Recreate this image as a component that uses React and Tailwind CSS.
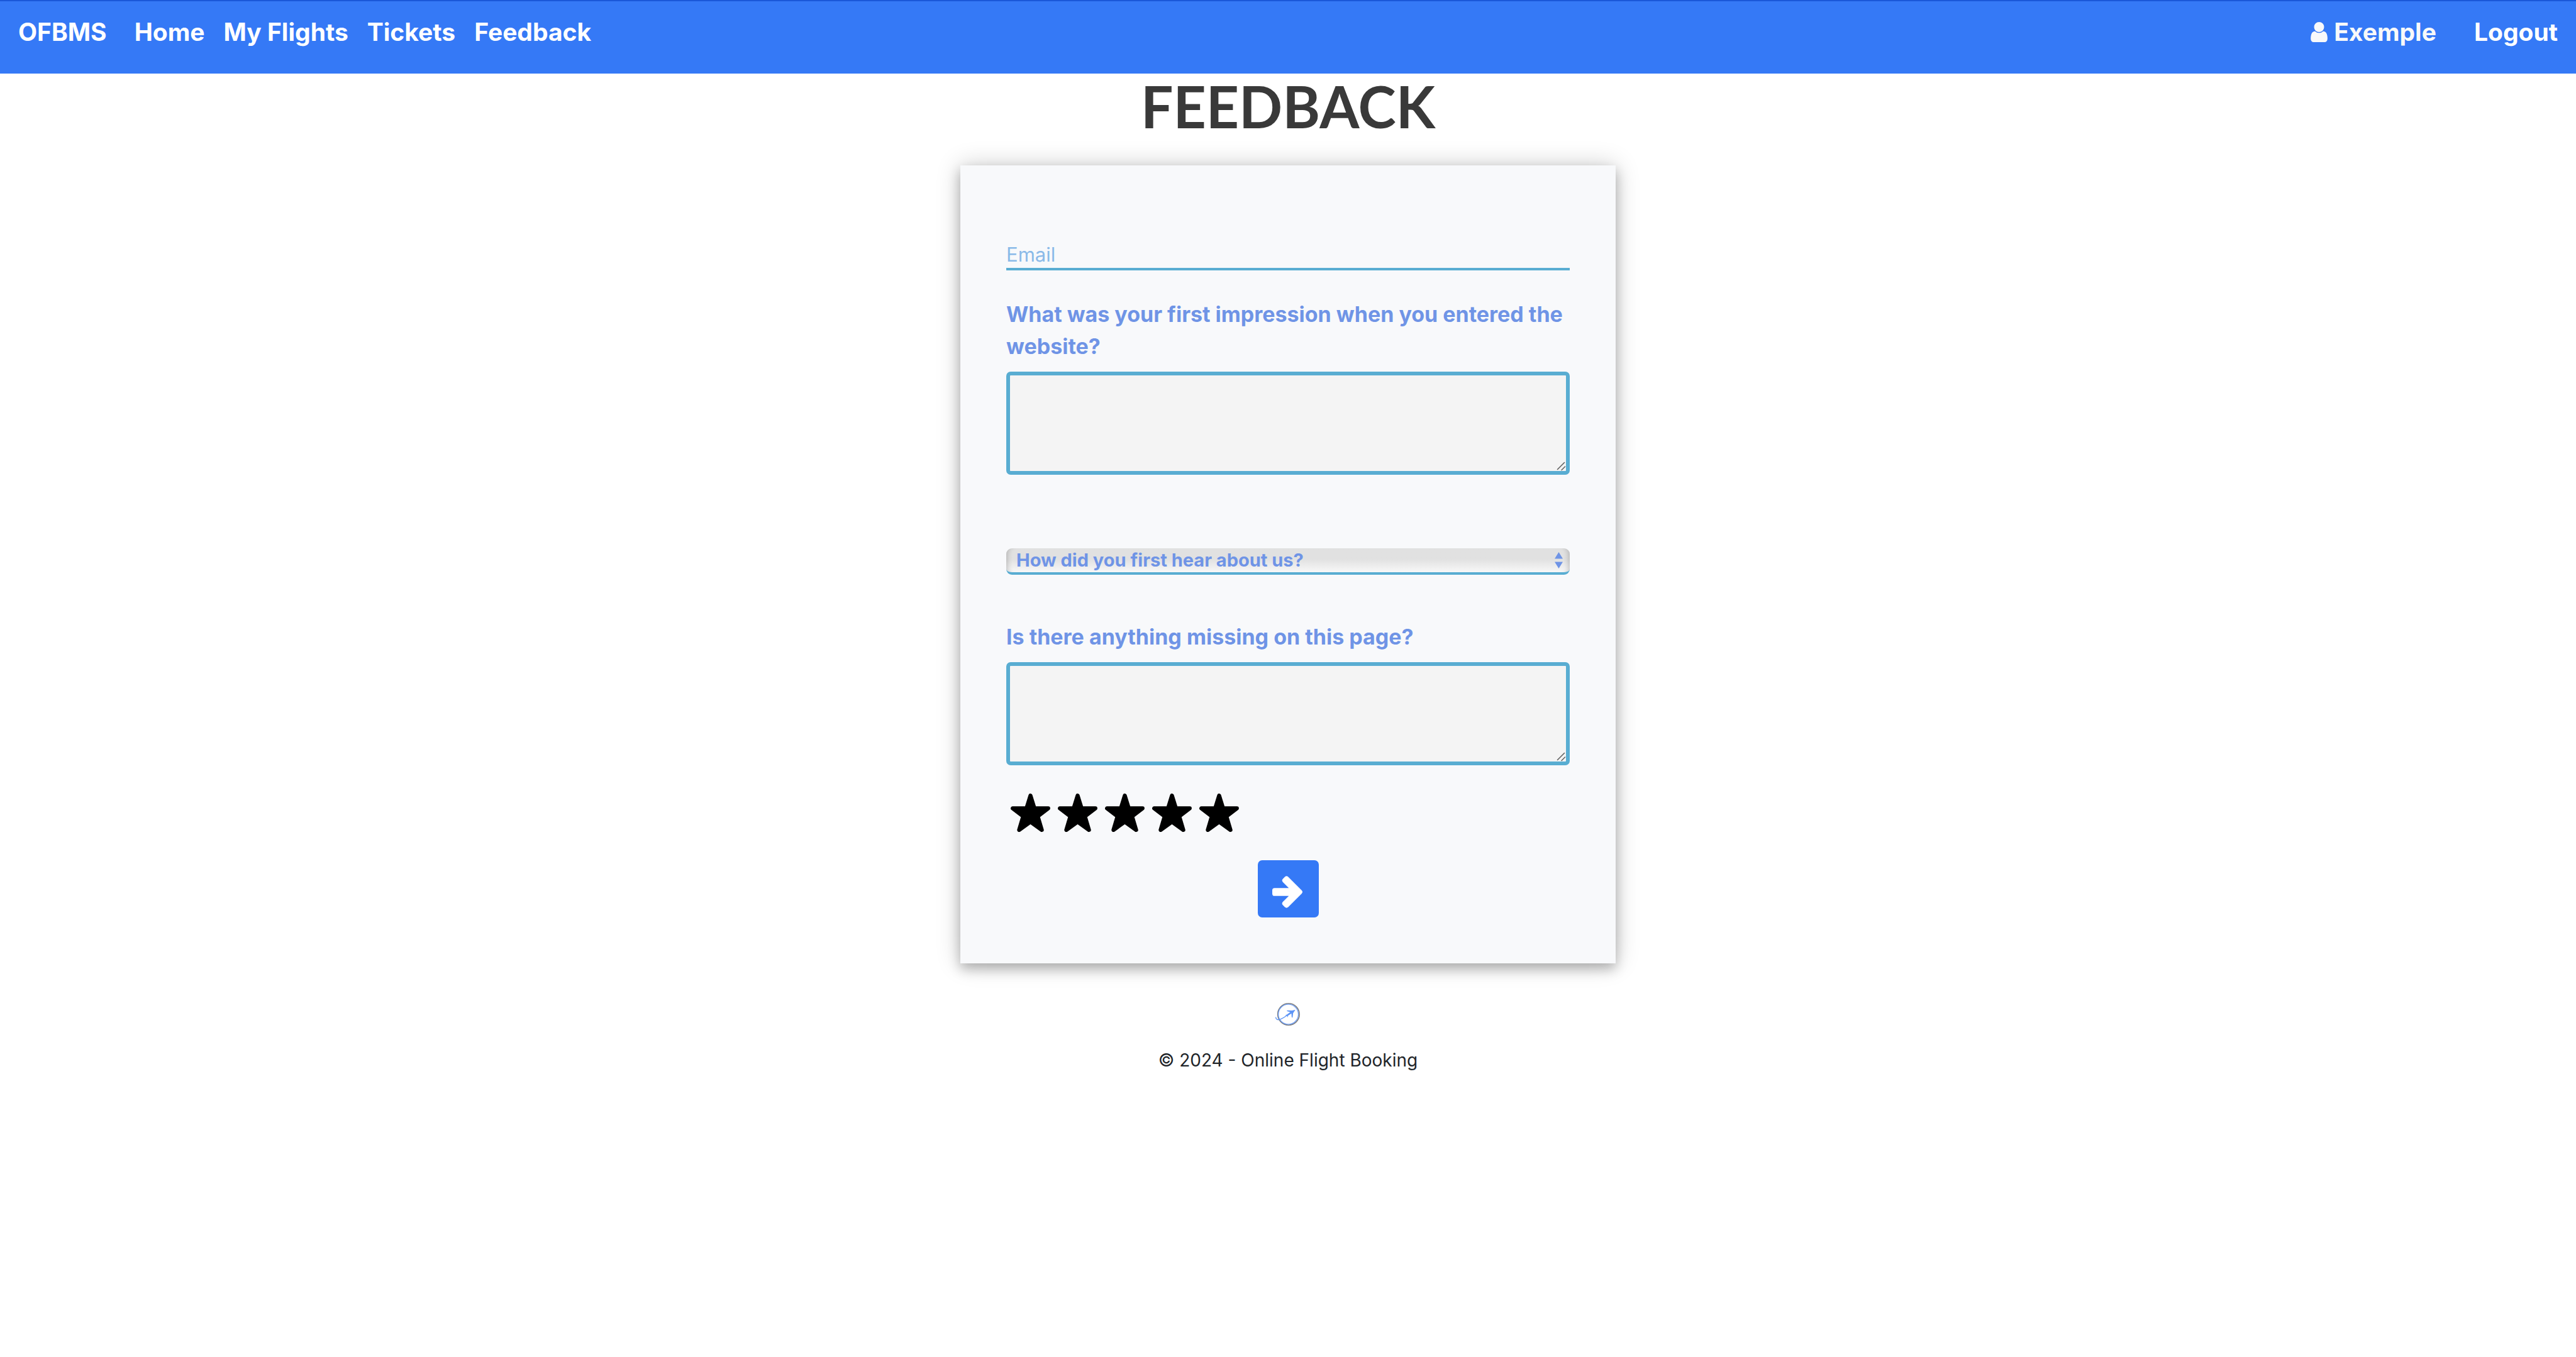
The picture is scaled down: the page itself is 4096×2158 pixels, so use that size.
const navLinks = ["Home", "My Flights", "Tickets", "Feedback"];

function UserIcon() {
  return (
    <svg viewBox="256 128 1280 1536" className="h-8 w-[27px] fill-current" aria-hidden="true">
      <path d="M1536 1399q0 109-62.5 187t-150.5 78h-854q-88 0-150.5-78t-62.5-187q0-85 8.5-160.5t31.5-152 58.5-131 94-89 134.5-34.5q131 128 313 128t313-128q76 0 134.5 34.5t94 89 58.5 131 31.5 152 8.5 160.5zm-256-887q0 159-112.5 271.5t-271.5 112.5-271.5-112.5-112.5-271.5 112.5-271.5 271.5-112.5 271.5 112.5 112.5 271.5z" />
    </svg>
  );
}

function Star() {
  return (
    <svg viewBox="0 0 69 67" className="h-[61px] w-[63px]" aria-hidden="true">
      <path
        d="M34.5 3.5 L41.4 25.8 L65.5 25.8 L47.2 39.8 L54.3 63.5 L34.5 49.4 L14.7 63.5 L21.8 39.8 L3.5 25.8 L27.6 25.8 Z"
        fill="#000"
        stroke="#000"
        strokeWidth="7"
        strokeLinejoin="round"
      />
    </svg>
  );
}

function ArrowRight() {
  return (
    <svg viewBox="0 0 53 56" className="h-[51px] w-12 fill-current" aria-hidden="true">
      <path d="M4 21 H29 L18.5 10.5 Q16 7.5 18.5 5 L22 1.5 Q25 -1 28 1.5 L51.5 25 Q54.5 28 51.5 31 L28 54.5 Q25 57 22 54.5 L18.5 51 Q16 48.5 18.5 45.5 L29 35 H4 Q0 35 0 31 V25 Q0 21 4 21 Z" />
    </svg>
  );
}

function Logo() {
  return (
    <svg viewBox="0 0 44 42" className="h-[38px] w-10" aria-hidden="true">
      <circle cx="23" cy="21" r="19" fill="none" stroke="#7d7d7d" strokeWidth="1.8" />
      <circle cx="22.6" cy="21" r="17.6" fill="none" stroke="#6b9cf5" strokeWidth="1.4" />
      <path d="M0.5 26 C0.5 30 4 31.5 8 30 C13 28 18 24.5 22 21.5 L27 18" fill="none" stroke="#5e95f6" strokeWidth="1.5" />
      <path d="M35 13 L31 19 L30 27 L28.5 26 L28 19.5 L22 23.5 L21.5 26.5 L20 23.5 L17 22.5 L20 21.5 L26 17 L20 15.5 L20.5 14 L29 14.5 Z" fill="#5e95f6" />
    </svg>
  );
}

function Question({ id, children }) {
  return (
    <div className="flex flex-col gap-[15px]">
      <label htmlFor={id} className="text-[34px] leading-[51px] font-bold">
        {children}
      </label>
      <div className="relative">
        <textarea
          id={id}
          className="block h-[164px] w-full resize-y rounded-[7px] border-6 border-[#59add2] bg-[#f4f4f4] outline-none [&::-webkit-resizer]:bg-transparent"
        />
        <svg viewBox="0 0 15 15" className="pointer-events-none absolute right-1.5 bottom-1.5 size-[15px]" aria-hidden="true">
          <path d="M1.5 12.5 L12.5 1.5 M8 13.5 L13.5 8" fill="none" stroke="#636363" strokeWidth="1.6" strokeLinecap="round" />
        </svg>
      </div>
    </div>
  );
}

export default function App() {
  return (
    <div className="min-h-screen bg-white font-['Inter',sans-serif]">
      <nav className="flex h-[117px] items-start justify-between border-t-2 border-[#1a57d8] bg-[#3579f6] px-[29px] pt-[25px] text-[39px] leading-12 font-bold text-white">
        <div className="flex items-center">
          <a href="#" className="mr-11">OFBMS</a>
          <div className="flex gap-[30px]">
            {navLinks.map((t) => (
              <a key={t} href="#">{t}</a>
            ))}
          </div>
        </div>
        <div className="flex items-center gap-[60px]">
          <a href="#" className="flex items-center gap-2.5 text-[#f8f9fa]">
            <UserIcon />
            Exemple
          </a>
          <a href="#">Logout</a>
        </div>
      </nav>

      <main className="flex flex-col items-center">
        <h1 className="h-[146px] font-['Lato',sans-serif] text-[91px] leading-[104px] font-bold text-[#393939]">
          FEEDBACK
        </h1>

        <form className="flex w-[1042px] flex-col bg-[#f8f9fb] px-[73px] pt-[119px] pb-[73px] text-[#6f94e6] shadow-[0_0_37px_rgba(0,0,0,0.2),0_9px_18px_rgba(0,0,0,0.24)]">
          <input
            type="email"
            aria-label="Email"
            placeholder="Email"
            className="h-12 w-full border-b-4 border-[#59add2] bg-transparent text-[31px] leading-11 outline-none placeholder:text-[#8abae8]"
          />
          <div className="mt-11">
            <Question id="impression">
              What was your first impression when you entered the website?
            </Question>
          </div>

          <div className="relative mt-[117px]">
            <select
              aria-label="How did you first hear about us?"
              className="block h-[42px] w-full appearance-none rounded-[9px] border-b-4 border-[#59add2] bg-linear-to-b from-[#e1e1e1] from-45% to-[#f8f8f8] px-4 text-[29px] leading-[38px] font-bold shadow-[inset_9px_0_9px_-7px_rgba(0,0,0,0.2),inset_-9px_0_9px_-7px_rgba(0,0,0,0.2)] outline-none"
            >
              <option>How did you first hear about us?</option>
            </select>
            <svg viewBox="0 0 13 26" className="pointer-events-none absolute top-1.5 right-[11px] h-[26px] w-[13px] fill-current" aria-hidden="true">
              <path d="M6.5 0 L13 10.5 H0 Z M0 15.5 H13 L6.5 26 Z" />
            </svg>
          </div>

          <div className="mt-[73px]">
            <Question id="missing">Is there anything missing on this page?</Question>
          </div>

          <div className="mt-[45px] flex gap-3 px-[7px]">
            {[1, 2, 3, 4, 5].map((n) => (
              <button key={n} type="button" aria-label={`${n} star rating`}>
                <Star />
              </button>
            ))}
          </div>

          <button
            type="submit"
            aria-label="Submit"
            className="mt-[45px] flex h-[91px] w-[97px] items-center justify-center self-center rounded-[7px] bg-[#3579f6] pt-[9px] pr-[3px] text-white"
          >
            <ArrowRight />
          </button>
        </form>

        <footer className="mt-[62px] flex flex-col items-center gap-8 text-[28px] leading-[44px] text-[#212529]">
          <Logo />
          <p>© 2024 - Online Flight Booking</p>
        </footer>
      </main>
    </div>
  );
}
